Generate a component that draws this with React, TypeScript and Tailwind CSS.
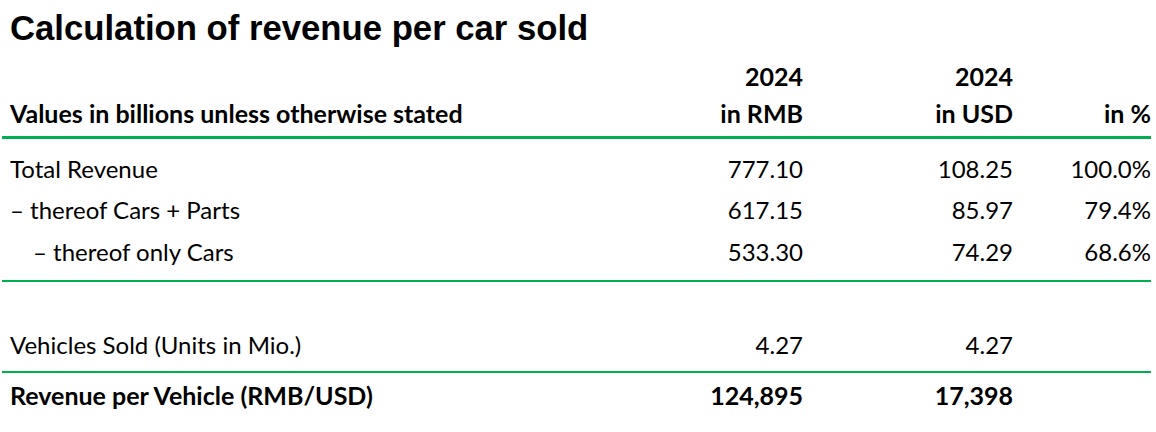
import React from "react";

const cols = "grid grid-cols-[601px_200px_210px_138px] items-center";

function Row({
  label,
  a,
  b,
  c,
  bold,
  indent,
  h,
  extra,
}: {
  label: string;
  a?: string;
  b?: string;
  c?: string;
  bold?: boolean;
  indent?: boolean;
  h: string;
  extra?: string;
}) {
  return (
    <div className={`${cols} ${h} ${extra ?? ""} ${bold ? "font-bold text-[25px]" : "text-[24px]"}`}>
      <div className={indent ? "pl-[31px]" : "pl-[8px]"}>{label}</div>
      <div className="text-right">{a}</div>
      <div className="text-right">{b}</div>
      <div className="text-right">{c}</div>
    </div>
  );
}

export default function App() {
  return (
    <div className="w-[1156px] h-[432px] bg-white text-black overflow-hidden">
      <div
        className="pl-[10px] pt-[11px] h-[45px] text-[34.7px] leading-none font-bold"
        style={{ fontFamily: '"Liberation Sans", Arial, sans-serif' }}
      >
        Calculation of revenue per car sold
      </div>
      <div
        className="ml-[2px] w-[1154px] pr-[5px] leading-none"
        style={{ fontFamily: 'Lato, "Open Sans", sans-serif' }}
      >
        <Row label="" a="2024" b="2024" h="h-[39px]" extra="mt-[12px]" bold />
        <Row
          label="Values in billions unless otherwise stated"
          a="in RMB"
          b="in USD"
          c="in %"
          h="h-[34px]"
          bold
        />
        <div className="mt-[6px] h-[3px] bg-[#00b050]" />
        <Row label="Total Revenue" a="777.10" b="108.25" c="100.0%" h="h-[40px]" extra="mt-[10px]" />
        <Row label="– thereof Cars + Parts" a="617.15" b="85.97" c="79.4%" h="h-[42px]" />
        <Row label="– thereof only Cars" a="533.30" b="74.29" c="68.6%" h="h-[42px]" indent />
        <div className="mt-[7px] h-[2px] bg-[#00b050]" />
        <Row label="Vehicles Sold (Units in Mio.)" a="4.27" b="4.27" h="h-[40px]" extra="mt-[43px]" />
        <div className="mt-[6px] h-[2px] bg-[#00b050]" />
        <Row label="Revenue per Vehicle (RMB/USD)" a="124,895" b="17,398" h="h-[44px]" bold />
      </div>
    </div>
  );
}
